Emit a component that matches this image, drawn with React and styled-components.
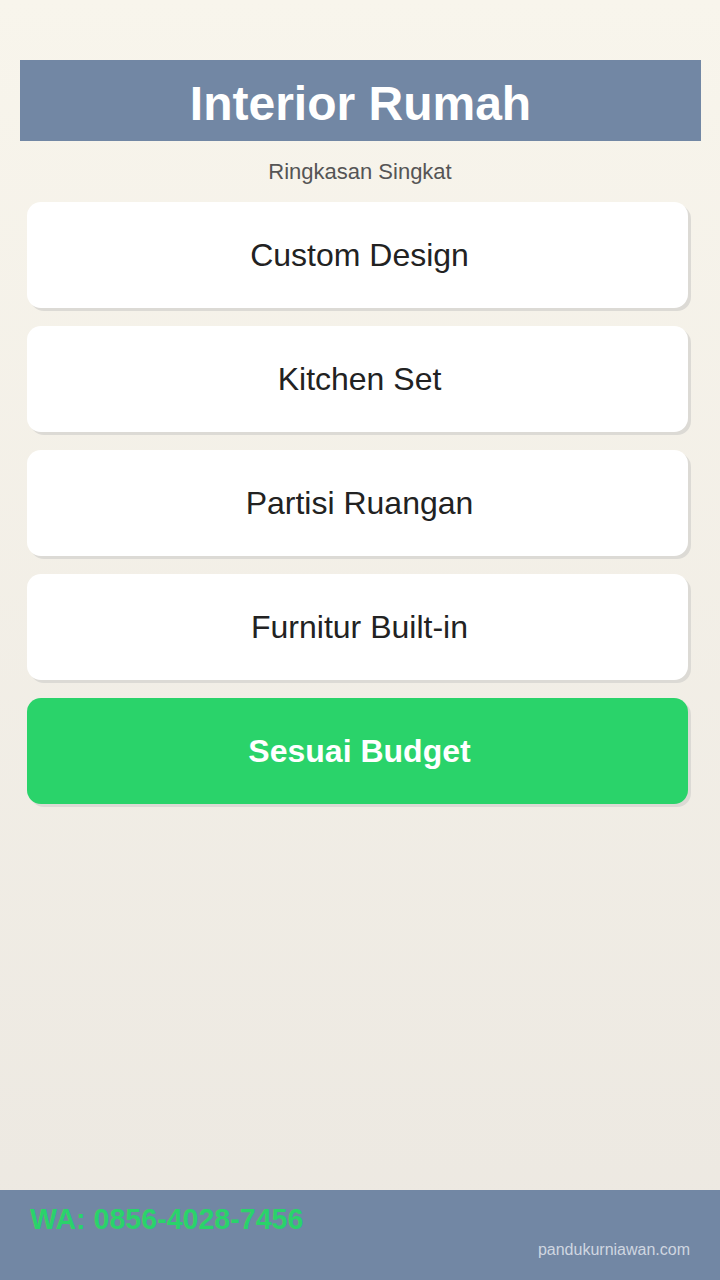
import React from 'react';
import styled, { createGlobalStyle } from 'styled-components';

const GlobalStyle = createGlobalStyle`
  html, body {
    margin: 0;
    padding: 0;
  }
  body {
    font-family: "Liberation Sans", Arial, sans-serif;
  }
`;

const Page = styled.div`
  min-height: 1280px;
  display: flex;
  flex-direction: column;
  background: linear-gradient(to bottom, #f8f5ec, #ece8e1);
`;

const Main = styled.main`
  flex: 1;
  padding-top: 60px;
`;

const Header = styled.header`
  margin: 0 19px 0 20px;
  height: 81px;
  box-sizing: border-box;
  padding-top: 6px;
  background: #7287a4;
  display: flex;
  align-items: center;
  justify-content: center;
`;

const Title = styled.h1`
  margin: 0;
  color: #fff;
  font-size: 48px;
  font-weight: 700;
`;

const Subtitle = styled.p`
  margin: 0;
  height: 61px;
  display: flex;
  align-items: center;
  justify-content: center;
  color: #555;
  font-size: 22px;
`;

const List = styled.div`
  display: flex;
  flex-direction: column;
  gap: 18px;
  padding: 0 32px 0 27px;
`;

const Card = styled.div`
  height: 106px;
  box-sizing: border-box;
  padding-left: 4px;
  border-radius: 14px;
  background: ${p => (p.accent ? '#2ad36a' : '#fff')};
  box-shadow: 3px 3px 0 #dcdad5;
  display: flex;
  align-items: center;
  justify-content: center;
  color: ${p => (p.accent ? '#fff' : '#222')};
  font-size: 32px;
  font-weight: ${p => (p.accent ? 700 : 400)};
`;

const Footer = styled.footer`
  height: 90px;
  background: #7287a4;
  padding: 12px 30px 0 30px;
  box-sizing: border-box;
  display: flex;
  flex-direction: column;
`;

const Phone = styled.div`
  color: #2ad36a;
  font-size: 28.6px;
  font-weight: 700;
  line-height: 34px;
`;

const Site = styled.div`
  align-self: flex-end;
  margin-top: 5px;
  color: #cfd6e0;
  font-size: 16px;
`;

const items = ['Custom Design', 'Kitchen Set', 'Partisi Ruangan', 'Furnitur Built-in'];

export default function App() {
  return (
    <>
      <GlobalStyle />
      <Page>
        <Main>
          <Header>
            <Title>Interior Rumah</Title>
          </Header>
          <Subtitle>Ringkasan Singkat</Subtitle>
          <List>
            {items.map(item => (
              <Card key={item}>{item}</Card>
            ))}
            <Card accent>Sesuai Budget</Card>
          </List>
        </Main>
        <Footer>
          <Phone>WA: 0856-4028-7456</Phone>
          <Site>pandukurniawan.com</Site>
        </Footer>
      </Page>
    </>
  );
}
